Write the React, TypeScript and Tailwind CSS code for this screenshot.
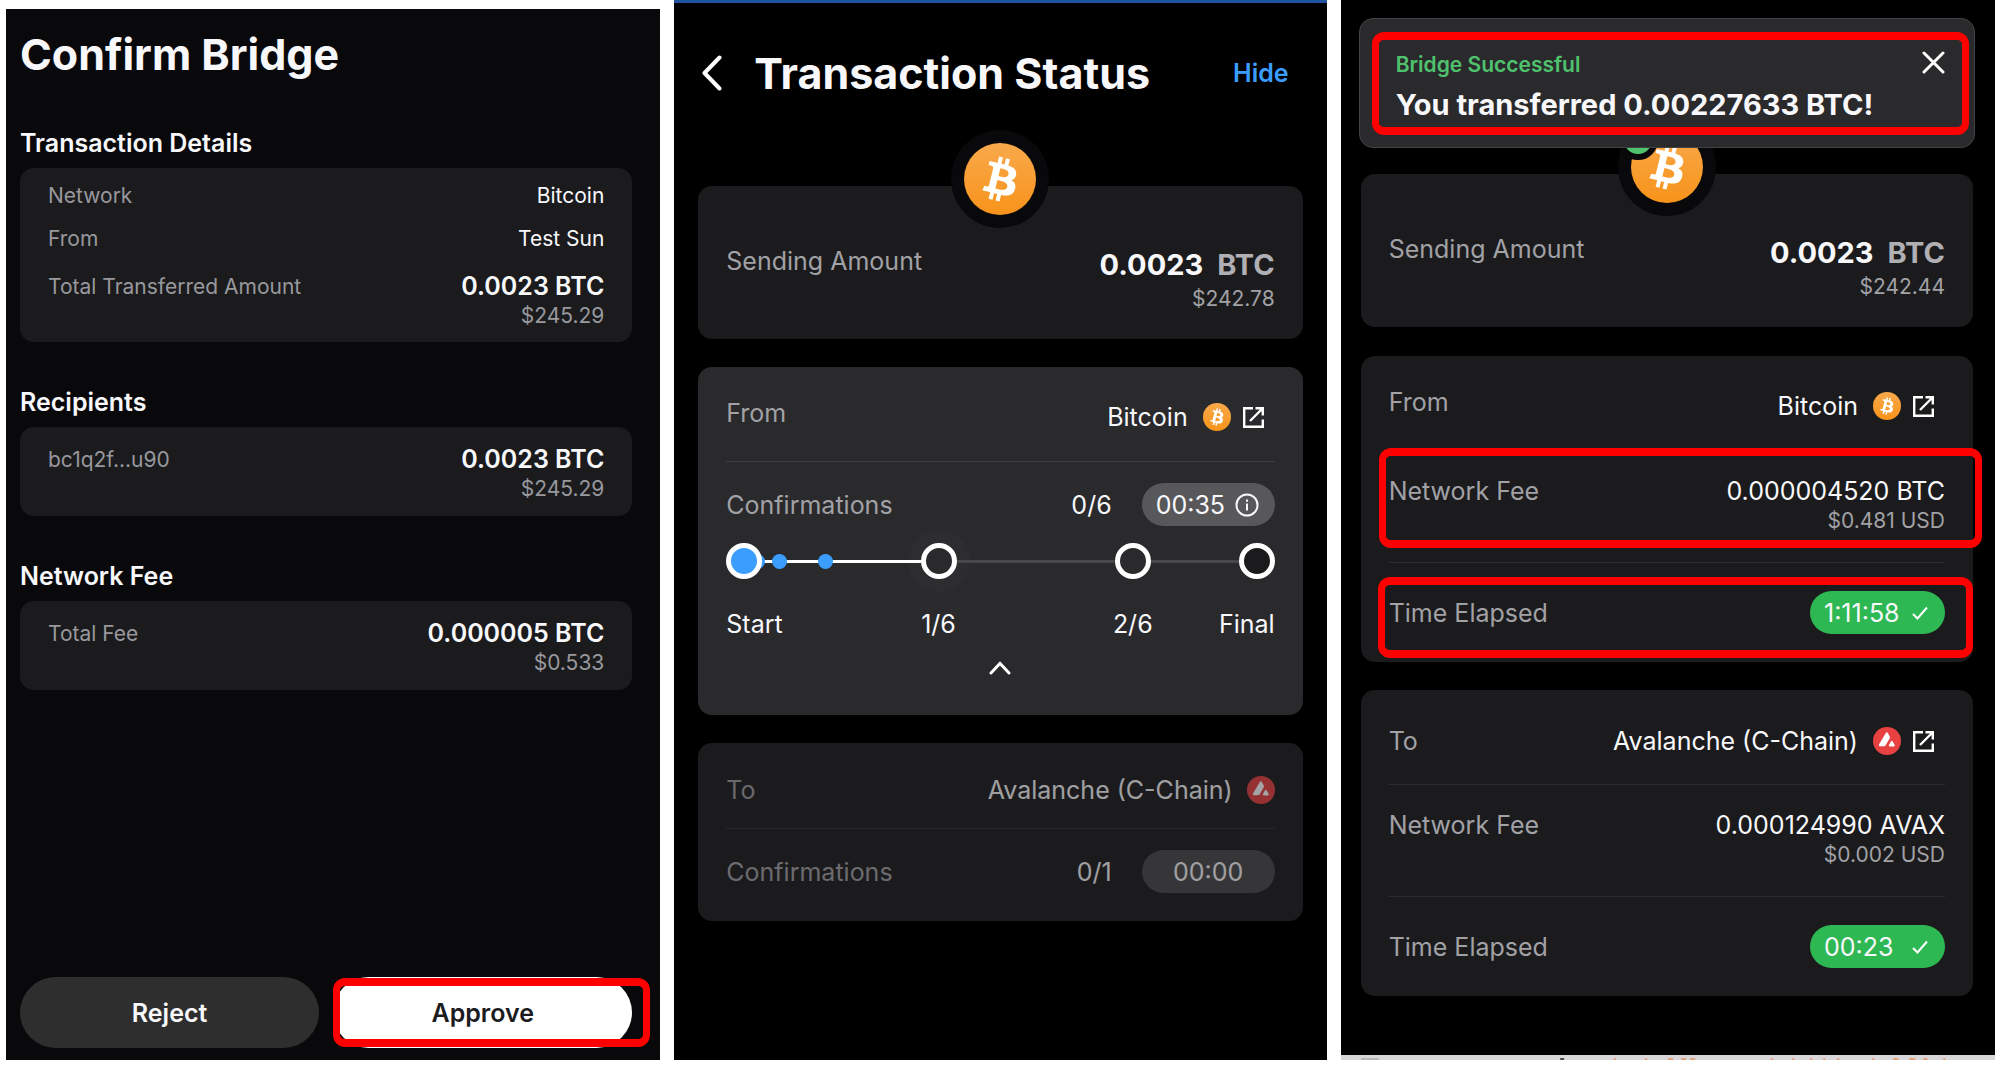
import type { ReactNode } from 'react';

const BTC_PATH = 'M23.189 14.02c.314-2.096-1.283-3.223-3.465-3.975l.708-2.84-1.728-.43-.69 2.765c-.454-.114-.92-.22-1.385-.326l.695-2.783L15.596 6l-.708 2.839c-.376-.086-.746-.17-1.104-.26l.002-.009-2.384-.595-.46 1.846s1.283.294 1.256.312c.7.175.826.638.805 1.006l-.806 3.235c.048.012.11.03.18.057l-.183-.045-1.13 4.532c-.086.212-.303.531-.793.41.018.025-1.256-.313-1.256-.313l-.858 1.978 2.25.561c.418.105.828.215 1.231.318l-.715 2.872 1.727.43.708-2.84c.472.127.93.245 1.378.357l-.706 2.828 1.728.43.715-2.866c2.948.558 5.164.333 6.097-2.333.752-2.146-.037-3.385-1.588-4.192 1.13-.26 1.98-1.003 2.207-2.538zm-3.95 5.538c-.533 2.147-4.148.986-5.32.695l.95-3.805c1.172.293 4.929.872 4.37 3.11zm.535-5.569c-.487 1.953-3.495.96-4.47.717l.86-3.45c.975.243 4.118.696 3.61 2.733z';

export default function App() {
  return (
    <div className="grid min-h-screen grid-cols-[654fr_652fr_654fr] gap-[14px] bg-white pr-[5px] pb-[5px] pl-[6px] font-['Inter',sans-serif] text-[#f8f8fb]">
      <ConfirmBridge />
      <TransactionStatus />
      <BridgeComplete />
    </div>
  );
}

/* ---------- screens ---------- */

function ConfirmBridge() {
  return (
    <main className="mt-[9px] flex min-w-0 flex-col bg-[#09090b] pt-[21px] pr-[28px] pb-[12px] pl-[14px]">
      <h1 className="mb-[49px] text-[43px] leading-[48px] font-bold">Confirm Bridge</h1>
      <DetailSection title="Transaction Details">
        <div className="flex flex-col gap-[15px] pt-[14px] pb-3">
          <div className="flex justify-between text-[21px] leading-[28px]"><span className="text-[#98989d]">Network</span><span>Bitcoin</span></div>
          <div className="flex justify-between text-[21px] leading-[28px]"><span className="text-[#98989d]">From</span><span>Test Sun</span></div>
          <div className="pt-[2px]"><AmountRow label="Total Transferred Amount" amount="0.0023 BTC" fiat="$245.29" /></div>
        </div>
      </DetailSection>
      <DetailSection title="Recipients">
        <div className="pt-4 pb-[13px]"><AmountRow label="bc1q2f...u90" amount="0.0023 BTC" fiat="$245.29" /></div>
      </DetailSection>
      <DetailSection title="Network Fee">
        <div className="pt-4 pb-[13px]"><AmountRow label="Total Fee" amount="0.000005 BTC" fiat="$0.533" /></div>
      </DetailSection>
      <div className="mt-auto grid grid-cols-2 gap-[14px] text-[25px] leading-[32px] font-semibold">
        <button type="button" className="h-[71px] rounded-full bg-[#2e2e2f]">Reject</button>
        <div className="relative">
          <button type="button" className="h-[71px] w-full rounded-full bg-white text-[#1c1c1e]">Approve</button>
          <Marker className="inset-y-px -right-[18px] left-0" />
        </div>
      </div>
    </main>
  );
}

function TransactionStatus() {
  return (
    <section className="flex min-w-0 flex-col border-t-3 border-[#1f55a0] bg-black px-[24px]">
      <header className="mt-[46px] flex h-12 items-center pr-[14px]">
        <button type="button" aria-label="Back" className="mr-[32px] ml-[4px]">
          <svg width="20" height="36" viewBox="0 0 20 36" fill="none" stroke="#fff" strokeWidth="4" strokeLinecap="round" strokeLinejoin="round"><path d="M17.500 2.500L2.500 18l15 15.500" /></svg>
        </button>
        <h2 className="text-[43px] leading-[48px] font-bold">Transaction Status</h2>
        <button type="button" className="ml-auto text-[25px] leading-[32px] font-semibold text-[#3b9eff]">Hide</button>
      </header>

      <SendingCard fiat="$242.78" className="mt-[89px]" />

      <div className="mt-[28px] rounded-[14px] bg-[#2a2a2c] px-[28px] pb-[33px]">
        <div className="flex items-start justify-between border-b border-[#3f3f41] pt-[30px] pb-[24px] text-[25px] leading-[32px]">
          <span className="text-[#a1a1a6]">From</span>
          <ChainLink name="Bitcoin" icon={<BtcCoin className="size-[28px]" />} />
        </div>
        <Confirmations count="0/6">
          <span className="flex h-[43px] w-[133px] items-center justify-between rounded-full bg-[#58585a] pr-[16px] pl-[14px]">
            00:35
            <svg width="24" height="24" viewBox="0 0 24 24" fill="none" stroke="currentColor" strokeWidth="2"><circle cx="12" cy="12" r="10.500" /><path d="M12 10.500v7M12 6.500v2.200" /></svg>
          </span>
        </Confirmations>
        <Timeline />
        <button type="button" aria-label="Collapse" className="mx-auto mt-[14px] flex h-[28px] items-center">
          <svg width="22" height="14" viewBox="0 0 22 14" fill="none" stroke="#fff" strokeWidth="3" strokeLinecap="round"><path d="M2 12l9-9.500L20 12" /></svg>
        </button>
      </div>

      <div className="mt-[28px] rounded-[14px] bg-[#1b1b1d] px-[28px] pb-[28px]">
        <div className="flex items-center justify-between border-b border-[#29292b] pt-[31px] pb-[22px] text-[25px] leading-[32px]">
          <span className="text-[#69696c]">To</span>
          <span className="flex items-center gap-[14px] opacity-60">Avalanche (C-Chain) <AvaxCoin className="size-[28px]" /></span>
        </div>
        <div className="opacity-60">
          <Confirmations count="0/1">
            <span className="flex h-[43px] w-[133px] items-center justify-center rounded-full bg-[#48484a]">00:00</span>
          </Confirmations>
        </div>
      </div>
    </section>
  );
}

function BridgeComplete() {
  return (
    <section className="flex min-w-0 flex-col bg-black pr-[22px] pl-[20px]">
      <div role="status" className="relative z-10 -mx-[2px] mt-[18px] h-[130px] rounded-[14px] border border-[#434345] bg-[#2a2a2c] pt-[32px] pl-[36px]">
        <p className="text-[21px] leading-[28px] font-semibold text-[#4fc26e]">Bridge Successful</p>
        <p className="mt-[10px] text-[29px] leading-[32px] font-bold">You transferred 0.00227633 BTC!</p>
        <button type="button" aria-label="Close" className="absolute top-[32px] right-[29px]">
          <svg width="23" height="23" viewBox="0 0 23 23" fill="none" stroke="#fff" strokeWidth="3" strokeLinecap="round"><path d="M2 2l19 19M21 2L2 21" /></svg>
        </button>
        <Marker className="top-[13px] right-[5px] bottom-[12px] left-[12px]" />
      </div>

      <SendingCard fiat="$242.44" done className="mt-[26px]" />

      <div className="relative mt-[29px] rounded-[14px] bg-[#1b1b1d] px-[28px] pb-[28px]">
        <div className="flex items-start justify-between border-b border-[#2d2d2f] pt-[30px] pb-[24px] text-[25px] leading-[32px]">
          <span className="text-[#a1a1a6]">From</span>
          <ChainLink name="Bitcoin" icon={<BtcCoin className="size-[28px]" />} />
        </div>
        <FeeRow amount="0.000004520 BTC" fiat="$0.481 USD" />
        <ElapsedRow time="1:11:58" />
        <Marker className="top-[92px] -right-[9px] left-[18px] h-[100px]" />
        <Marker className="top-[221px] right-0 bottom-[4px] left-[17px]" />
      </div>

      <div className="mt-[28px] rounded-[14px] bg-[#1b1b1d] px-[28px] pb-[28px]">
        <div className="flex items-center justify-between border-b border-[#2d2d2f] pt-[31px] pb-[23px] text-[25px] leading-[32px]">
          <span className="text-[#a1a1a6]">To</span>
          <ChainLink name="Avalanche (C-Chain)" icon={<AvaxCoin className="size-[28px]" />} />
        </div>
        <FeeRow amount="0.000124990 AVAX" fiat="$0.002 USD" />
        <ElapsedRow time="00:23" />
      </div>

      {/* sliver of the page underneath */}
      <div className="-mr-[22px] mt-auto -ml-[20px] h-[5px] bg-[#d9d6da]">
        <svg className="h-[5px] w-full" viewBox="0 0 654 5" preserveAspectRatio="none">
          <path stroke="#b4b8b8" strokeWidth="2" d="M20 4h18" />
          <path stroke="#4b4b4f" strokeWidth="2" d="M219 4h4" />
          <path stroke="#e3a27c" strokeWidth="2" d="M273 4h2M304 4h2M327 4h5M340 4h5M349 4h5M430 4h2M451 4h2M469 4h2M482 4h2M496 4h2M531 4h2M552 4h5M568 4h6M582 4h4M602 4h2" />
        </svg>
      </div>
    </section>
  );
}

/* ---------- shared pieces ---------- */

function DetailSection({ title, children }: { title: string; children: ReactNode }) {
  return (
    <section className="mb-[44px]">
      <h2 className="mb-[9px] text-[25px] leading-[32px] font-semibold">{title}</h2>
      <div className="rounded-[14px] bg-[#1b1b1d] px-[28px]">{children}</div>
    </section>
  );
}

function AmountRow({ label, amount, fiat }: { label: string; amount: string; fiat: string }) {
  return (
    <div className="flex justify-between">
      <span className="text-[21px] leading-[34px] text-[#98989d]">{label}</span>
      <div className="text-right">
        <div className="text-[25px] leading-[32px] font-semibold">{amount}</div>
        <div className="text-[21px] leading-[28px] text-[#98989d]">{fiat}</div>
      </div>
    </div>
  );
}

function SendingCard({ fiat, done, className }: { fiat: string; done?: boolean; className: string }) {
  return (
    <div className={`relative flex justify-between rounded-[14px] bg-[#1b1b1d] px-[28px] pt-[59px] pb-[26px] ${className}`}>
      <div className="absolute -top-[56px] left-1/2 flex size-[98px] -translate-x-1/2 items-center justify-center rounded-full bg-[#09090b]">
        <BtcCoin className="size-[72px]" />
        {done && <span className="absolute top-[2px] left-0 size-[40px] rounded-full border-6 border-[#09090b] bg-[#4fc26e]" />}
      </div>
      <span className="text-[25px] leading-[32px] text-[#a1a1a6]">Sending Amount</span>
      <div className="pt-[4px] text-right">
        <div className="flex justify-end gap-[14px] text-[29px] leading-[32px] font-bold"><span>0.0023</span><span className="text-[#b0b0b4]">BTC</span></div>
        <div className="mt-[4px] text-[21px] leading-[28px] text-[#a1a1a6]">{fiat}</div>
      </div>
    </div>
  );
}

function ChainLink({ name, icon }: { name: string; icon: ReactNode }) {
  return (
    <span className="flex h-[40px] items-center pr-[11px]">
      {name}
      <span className="mr-[12px] ml-[15px]">{icon}</span>
      <a href="#explorer" aria-label={`Open ${name} explorer`}>
        <svg width="21" height="21" viewBox="0 0 21 21" fill="none" stroke="#fff" strokeWidth="2.400"><path d="M10 1.200H1.200v18.600h18.600V12.500M12.500 1.200h7.300v7.300M19.500 1.500L7 14" /></svg>
      </a>
    </span>
  );
}

function Confirmations({ count, children }: { count: string; children: ReactNode }) {
  return (
    <div className="mt-[21px] flex items-center text-[25px] leading-[32px]">
      <span className="text-[#a1a1a6]">Confirmations</span>
      <span className="mr-[30px] ml-auto">{count}</span>
      {children}
    </div>
  );
}

function FeeRow({ amount, fiat }: { amount: string; fiat: string }) {
  return (
    <div className="flex justify-between border-b border-[#2d2d2f] pt-[24px] pb-[27px] text-[25px] leading-[32px]">
      <span className="text-[#a1a1a6]">Network Fee</span>
      <div className="text-right">
        <div>{amount}</div>
        <div className="text-[21px] leading-[28px] text-[#a1a1a6]">{fiat}</div>
      </div>
    </div>
  );
}

function ElapsedRow({ time }: { time: string }) {
  return (
    <div className="mt-[28px] flex items-center justify-between text-[25px] leading-[32px]">
      <span className="text-[#a1a1a6]">Time Elapsed</span>
      <span className="flex h-[43px] min-w-[135px] items-center justify-between gap-[10px] rounded-full bg-[#2eb853] pr-[17px] pl-[14px]">
        {time}
        <svg width="16" height="14" viewBox="0 0 16 14" fill="none" stroke="#fff" strokeWidth="2"><path d="M1 8l4.500 4.500L15 1.500" /></svg>
      </span>
    </div>
  );
}

function Timeline() {
  const node = 'relative z-10 size-[36px] rounded-full border-[5px] border-white';
  return (
    <>
      <div className="mt-[17px] grid grid-cols-[36px_9fr_36px_9fr_36px_5fr_36px] items-center">
        <span className={`${node} bg-[#3b9eff]`} />
        <span className="relative z-[1] h-[3px] bg-white">
          <i className="absolute -top-[6px] -left-[12px] size-[15px] rounded-full bg-[#3b9eff]" />
          <i className="absolute -top-[6px] left-[6%] size-[15px] rounded-full bg-[#3b9eff]" />
          <i className="absolute -top-[6px] left-[35%] size-[15px] rounded-full bg-[#3b9eff]" />
        </span>
        <span className="relative">
          <i className="absolute -inset-[13px] rounded-full bg-[#2d2d2f]" />
          <span className={`${node} block bg-[#2a2a2c]`} />
        </span>
        <span className="relative z-[1] h-[3px] bg-[#48484a]" />
        <span className={`${node} bg-[#2a2a2c]`} />
        <span className="h-[3px] bg-[#48484a]" />
        <span className={`${node} bg-[#1b1b1d]`} />
      </div>
      <div className="mt-[29px] grid grid-cols-[36px_9fr_36px_9fr_36px_5fr_36px] text-[25px] leading-[32px] whitespace-nowrap">
        <span className="flex">Start</span>
        <span className="col-start-3 flex justify-center">1/6</span>
        <span className="col-start-5 flex justify-center">2/6</span>
        <span className="col-start-7 flex justify-end">Final</span>
      </div>
    </>
  );
}

function Marker({ className }: { className: string }) {
  return <div className={`pointer-events-none absolute rounded-[12px] border-x-7 border-y-8 border-[#ff0000] ${className}`} />;
}

function BtcCoin({ className }: { className: string }) {
  return (
    <svg className={className} viewBox="0 0 32 32">
      <defs><linearGradient id="btc" x2="0" y2="1"><stop stopColor="#f9a94b" /><stop offset="1" stopColor="#f7931a" /></linearGradient></defs>
      <circle cx="16" cy="16" r="16" fill="url(#btc)" />
      <path fill="#fff" d={BTC_PATH} />
    </svg>
  );
}

function AvaxCoin({ className }: { className: string }) {
  return (
    <svg className={className} viewBox="0 0 32 32">
      <circle cx="16" cy="16" r="16" fill="#e84142" />
      <path fill="#fff" d="M14.500 7q1.300-2 2.600 0l1.900 3.500q.7 1.300 0 2.600l-4.500 7.700q-.7 1.200-2.200 1.300H8q-2.100-.1-1.200-2zM18.300 20.200l2-3.400q1.200-1.900 2.400 0l2 3.400q.9 1.800-1.100 2h-4.200q-2-.2-1.100-2z" />
    </svg>
  );
}
